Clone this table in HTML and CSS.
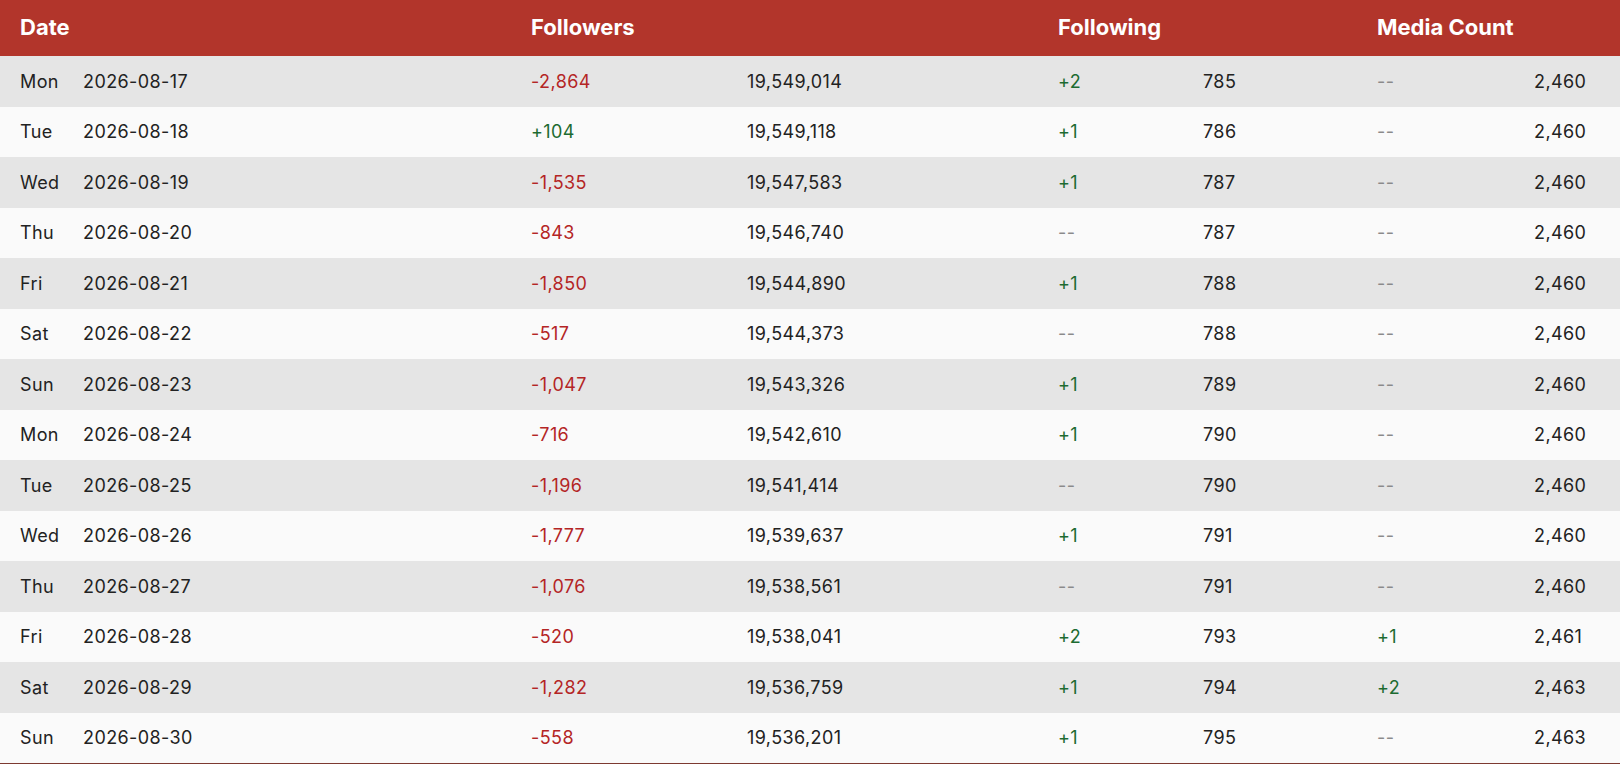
FILE: index.html
```html
<!DOCTYPE html>
<html lang="en">
<head>
<meta charset="utf-8">
<title>Stats</title>
<link rel="stylesheet" href="styles.css">
</head>
<body>
<table class="stats">
  <colgroup>
    <col class="c-day"><col class="c-date"><col class="c-fd"><col class="c-ft"><col class="c-gd"><col class="c-gt"><col class="c-md"><col class="c-mt">
  </colgroup>
  <thead>
    <tr><th colspan="2">Date</th><th colspan="2">Followers</th><th colspan="2">Following</th><th colspan="2">Media Count</th></tr>
  </thead>
  <tbody>
    <tr><td>Mon</td><td>2026-08-17</td><td class="neg">-2,864</td><td>19,549,014</td><td class="pos">+2</td><td>785</td><td class="nil">--</td><td>2,460</td></tr>
    <tr><td>Tue</td><td>2026-08-18</td><td class="pos">+104</td><td>19,549,118</td><td class="pos">+1</td><td>786</td><td class="nil">--</td><td>2,460</td></tr>
    <tr><td>Wed</td><td>2026-08-19</td><td class="neg">-1,535</td><td>19,547,583</td><td class="pos">+1</td><td>787</td><td class="nil">--</td><td>2,460</td></tr>
    <tr><td>Thu</td><td>2026-08-20</td><td class="neg">-843</td><td>19,546,740</td><td class="nil">--</td><td>787</td><td class="nil">--</td><td>2,460</td></tr>
    <tr><td>Fri</td><td>2026-08-21</td><td class="neg">-1,850</td><td>19,544,890</td><td class="pos">+1</td><td>788</td><td class="nil">--</td><td>2,460</td></tr>
    <tr><td>Sat</td><td>2026-08-22</td><td class="neg">-517</td><td>19,544,373</td><td class="nil">--</td><td>788</td><td class="nil">--</td><td>2,460</td></tr>
    <tr><td>Sun</td><td>2026-08-23</td><td class="neg">-1,047</td><td>19,543,326</td><td class="pos">+1</td><td>789</td><td class="nil">--</td><td>2,460</td></tr>
    <tr><td>Mon</td><td>2026-08-24</td><td class="neg">-716</td><td>19,542,610</td><td class="pos">+1</td><td>790</td><td class="nil">--</td><td>2,460</td></tr>
    <tr><td>Tue</td><td>2026-08-25</td><td class="neg">-1,196</td><td>19,541,414</td><td class="nil">--</td><td>790</td><td class="nil">--</td><td>2,460</td></tr>
    <tr><td>Wed</td><td>2026-08-26</td><td class="neg">-1,777</td><td>19,539,637</td><td class="pos">+1</td><td>791</td><td class="nil">--</td><td>2,460</td></tr>
    <tr><td>Thu</td><td>2026-08-27</td><td class="neg">-1,076</td><td>19,538,561</td><td class="nil">--</td><td>791</td><td class="nil">--</td><td>2,460</td></tr>
    <tr><td>Fri</td><td>2026-08-28</td><td class="neg">-520</td><td>19,538,041</td><td class="pos">+2</td><td>793</td><td class="pos">+1</td><td>2,461</td></tr>
    <tr><td>Sat</td><td>2026-08-29</td><td class="neg">-1,282</td><td>19,536,759</td><td class="pos">+1</td><td>794</td><td class="pos">+2</td><td>2,463</td></tr>
    <tr><td>Sun</td><td>2026-08-30</td><td class="neg">-558</td><td>19,536,201</td><td class="pos">+1</td><td>795</td><td class="nil">--</td><td>2,463</td></tr>
  </tbody>
</table>
</body>
</html>
```
FILE: styles.css
```css
html, body {
  margin: 0;
  padding: 0;
  background: #ffffff;
}
body {
  font-family: Inter, "Noto Sans", "Liberation Sans", sans-serif;
  color: #222222;
}
.stats {
  width: 1620px;
  border-collapse: collapse;
  table-layout: fixed;
  border-bottom: 1px solid #7d3a31;
}
.c-day { width: 63px; }
.c-date { width: 448px; }
.c-fd { width: 216px; }
.c-ft { width: 311px; }
.c-gd { width: 145px; }
.c-gt { width: 174px; }
.c-md { width: 157px; }
.c-mt { width: 106px; }
.stats th {
  background: #b2352b;
  color: #ffffff;
  font-weight: 700;
  font-size: 22px;
  text-align: left;
  height: 56px;
  padding: 0 0 2px 20px;
  box-sizing: border-box;
}
.stats td {
  font-size: 18px;
  letter-spacing: 0.4px;
  height: 50.5px;
  padding: 0 0 0 20px;
  box-sizing: border-box;
  white-space: nowrap;
}
.stats tbody tr:nth-child(odd) td { background: #e5e5e5; }
.stats tbody tr:nth-child(even) td { background: #fafafa; }
.neg { color: #b42525; }
.pos { color: #1d6b31; }
.nil { color: #8a8a8a; }
```
